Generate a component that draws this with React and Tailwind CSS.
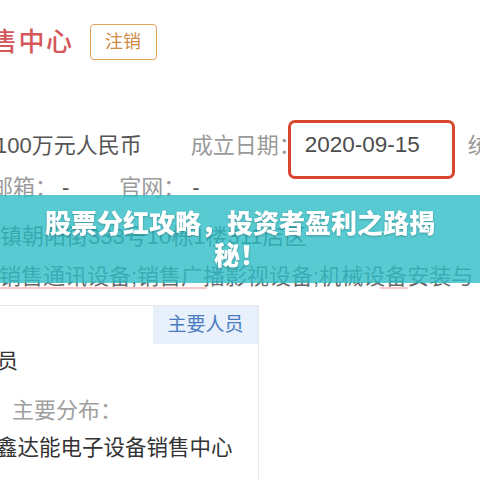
export default function App() {
    return (
        <div
            className="relative w-[480px] h-[480px] overflow-hidden bg-white text-[#555]"
            style={{ fontFamily: "'Liberation Sans', 'Noto Sans CJK SC', sans-serif" }}
        >
            {/* Header */}
            <div className="flex items-center h-[36px] mt-[24px] whitespace-nowrap">
                <span className="ml-[-9px] text-[26px] font-medium tracking-[1.5px] text-[#d4585a]">售中心</span>
                <span className="ml-[16px] flex items-center justify-center w-[67px] h-[36px] border-[1.5px] border-[#e2a25e] rounded-[4px] text-[18px] text-[#cf8a45]">
                    注销
                </span>
            </div>

            {/* Capital / date */}
            <div className="flex items-center h-[30px] mt-[70px] text-[22px] whitespace-nowrap">
                <span className="ml-[-5px] text-[#555]">100万元人民币</span>
                <span className="ml-[49px] text-[#9a9a9a]">成立日期：</span>
                <span className="relative ml-[4px] text-[#4d4d4d] text-[22.5px]">
                    2020-09-15
                    <span className="absolute left-[-17px] right-[-35px] top-[-8px] bottom-[-17px] border-[3px] border-[#d9442e] rounded-[7px]" />
                </span>
                <span className="ml-[48px] text-[#9a9a9a]">统</span>
            </div>

            {/* Mail / site */}
            <div className="flex items-center h-[30px] mt-[12px] text-[22px] whitespace-nowrap">
                <span className="ml-[-9px] text-[#9a9a9a]">邮箱：</span>
                <span className="ml-[5px] text-[#555]">-</span>
                <span className="ml-[50px] text-[#9a9a9a]">官网：</span>
                <span className="ml-[7px] text-[#555]">-</span>
            </div>

            {/* Address */}
            <div className="flex items-center h-[30px] mt-[19px] text-[22px] whitespace-nowrap text-[#555]">
                <span>镇朝阳街333号10栋1楼311店区</span>
            </div>

            {/* Scope */}
            <div className="flex items-center h-[30px] mt-[10px] text-[22px] whitespace-nowrap text-[#666]">
                <span className="ml-[-1px]">销售通讯设备;销售广播影视设备;机械设备安装与</span>
            </div>
            <div className="flex h-[2px] mt-[-4px]">
                <div className="w-[207px] bg-[#e37a7a] opacity-40" />
                <div className="ml-[173px] w-[28px] bg-[#e37a7a] opacity-40" />
            </div>

            {/* Members panel */}
            <div className="flex mt-[16px] h-[200px]">
                <div className="w-[259px] border-t border-r border-[#e6e6e6] flex flex-col">
                    <div className="flex justify-end">
                        <div className="w-[105px] h-[38px] bg-[#e7f0fb] flex items-center justify-center text-[19px] text-[#4a7cc0]">
                            主要人员
                        </div>
                    </div>
                    <div className="flex items-center h-[24px] mt-[5px] text-[21px] text-[#333] whitespace-nowrap">
                        <span className="ml-[-3px]">员</span>
                    </div>
                    <div className="flex items-center h-[24px] mt-[25px] text-[22px] text-[#a0a0a0] whitespace-nowrap">
                        <span className="ml-[12px]">主要分布：</span>
                    </div>
                    <div className="flex items-center h-[24px] mt-[14px] text-[21.5px] text-[#333] whitespace-nowrap">
                        <span className="ml-[-4px]">鑫达能电子设备销售中心</span>
                    </div>
                </div>
            </div>

            {/* Title banner */}
            <div className="absolute left-0 right-0 top-[195px] h-[88px] bg-[#2ebec7]/80 flex items-center justify-center">
                <div className="w-[404px] mt-[2px] text-center text-white font-black text-[26px] leading-[32px] drop-shadow-[0_1px_1px_rgba(0,0,0,0.25)]">
                    股票分红攻略，投资者盈利之路揭秘！
                </div>
            </div>
        </div>
    )
}
